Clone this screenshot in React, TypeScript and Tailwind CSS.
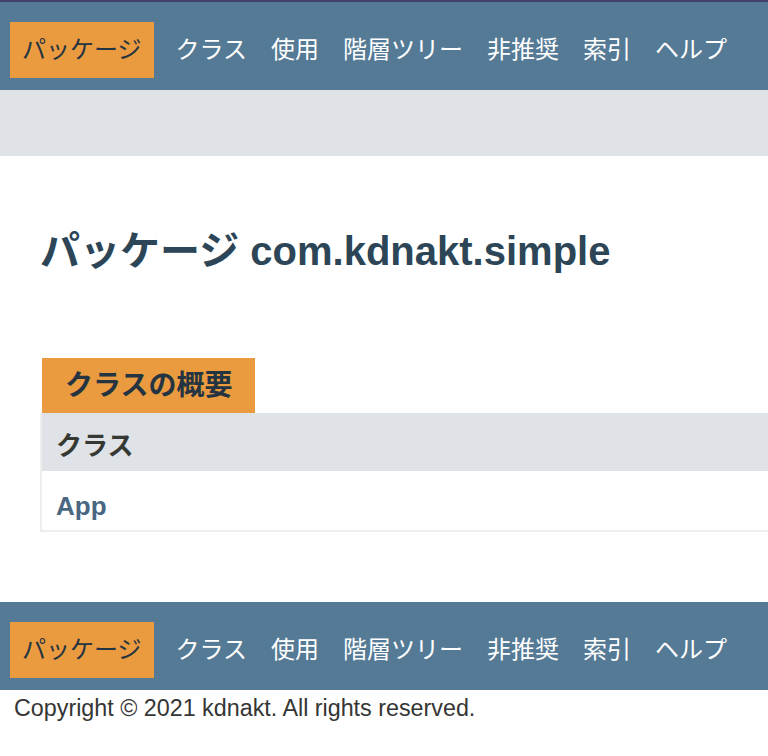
const navItems = ["パッケージ", "クラス", "使用", "階層ツリー", "非推奨", "索引", "ヘルプ"];

function NavBar() {
  return (
    <nav className="flex h-[88px] items-start bg-[#557a95] pl-[10px] pt-[20px]">
      <ul className="flex items-center">
        {navItems.map((label, i) =>
          i === 0 ? (
            <li
              key={label}
              className="mr-[22px] flex h-[56px] items-center bg-[#ea9b3f] px-[12px] text-[#253441]"
            >
              {label}
            </li>
          ) : (
            <li key={label} className="mr-[24px] flex h-[56px] items-center text-white">
              {label}
            </li>
          )
        )}
      </ul>
    </nav>
  );
}

export default function App() {
  return (
    <div className="min-h-[756px] overflow-hidden bg-white font-['Liberation_Sans','Noto_Sans_CJK_JP',sans-serif] text-[24px] leading-[28px] text-[#353833]">
      <div className="h-[2px] bg-[#45406a]" />
      <NavBar />
      <div className="h-[66px] bg-[#dfe2e6]" />

      <main className="pl-[40px]">
        <h1 className="mt-[71px] text-[40px] font-bold leading-[48px] text-[#2c4557]">
          パッケージ com.kdnakt.simple
        </h1>

        <section className="mt-[83px]">
          <div className="flex">
            <span className="ml-[2px] flex h-[55px] items-center bg-[#ea9b3f] px-[23px] text-[28px] font-bold text-[#253441]">
              クラスの概要
            </span>
          </div>
          <div className="border-b-2 border-l-2 border-[#eeeeee]">
            <div className="flex h-[58px] items-center bg-[#dfe2e6] pl-[14px] pt-[8px] text-[26px] font-bold">
              クラス
            </div>
            <div className="flex h-[59px] items-center pl-[14px] pt-[10px] text-[26px] font-bold text-[#4a6782]">
              App
            </div>
          </div>
        </section>
      </main>

      <footer className="mt-[70px]">
        <NavBar />
        <p className="mt-[4px] pl-[14px] text-[23.3px] leading-[28px] text-[#353535]">
          Copyright © 2021 kdnakt. All rights reserved.
        </p>
      </footer>
    </div>
  );
}
